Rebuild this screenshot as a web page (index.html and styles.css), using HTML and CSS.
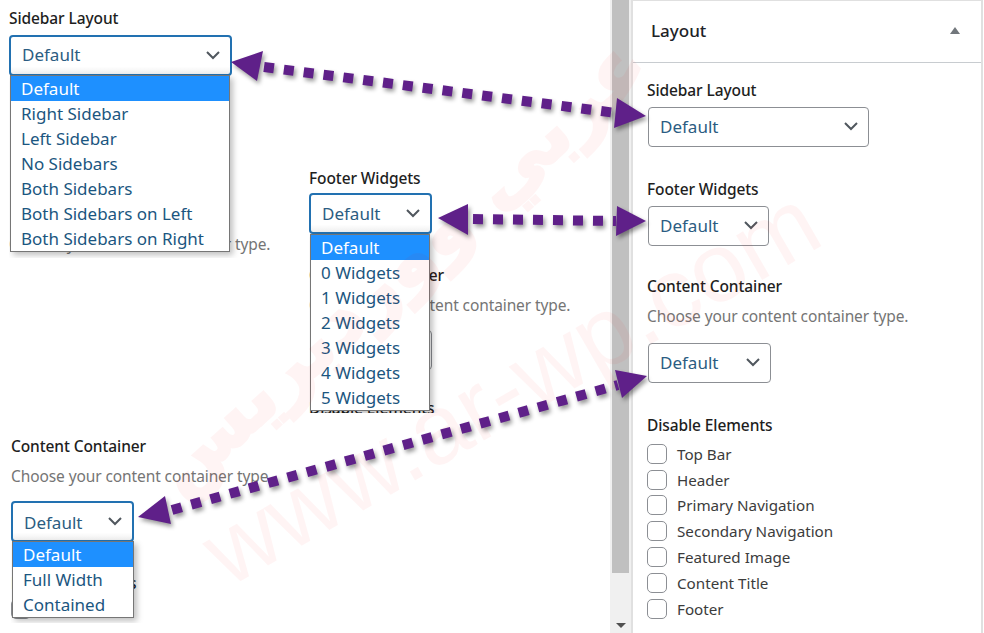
FILE: index.html
```html
<!DOCTYPE html>
<html lang="en">

<head>
    <meta http-equiv="Content-Type" content="text/html; charset=utf-8" />
    <title>Layout metabox dropdowns</title>
    <link rel="stylesheet" href="styles.css">
</head>

<body>
    <div id="main">
        <div id="shots">
            <div class="clip" id="clip-sidebar">
                <p class="label">Sidebar Layout</p>
                <div class="select open wide">Default
                    <svg class="chevron" viewBox="0 0 14 9"><path d="M1 1l6 6 6-6" /></svg>
                </div>
                <p class="help behind">Choose your content container type.</p>
                <ul class="dropdown">
                    <li class="selected">Default</li>
                    <li>Right Sidebar</li>
                    <li>Left Sidebar</li>
                    <li>No Sidebars</li>
                    <li>Both Sidebars</li>
                    <li>Both Sidebars on Left</li>
                    <li>Both Sidebars on Right</li>
                </ul>
            </div>

            <div class="clip" id="clip-footer">
                <p class="label">Footer Widgets</p>
                <div class="select open">Default
                    <svg class="chevron" viewBox="0 0 14 9"><path d="M1 1l6 6 6-6" /></svg>
                </div>
                <p class="label second">Content Container</p>
                <p class="help">Choose your content container type.</p>
                <div class="select ghost">Default</div>
                <p class="label third">Disable Elements</p>
                <ul class="dropdown">
                    <li class="selected">Default</li>
                    <li>0 Widgets</li>
                    <li>1 Widgets</li>
                    <li>2 Widgets</li>
                    <li>3 Widgets</li>
                    <li>4 Widgets</li>
                    <li>5 Widgets</li>
                </ul>
            </div>

            <div class="clip" id="clip-content">
                <p class="label">Content Container</p>
                <p class="help">Choose your content container type.</p>
                <div class="select open">Default
                    <svg class="chevron" viewBox="0 0 14 9"><path d="M1 1l6 6 6-6" /></svg>
                </div>
                <p class="label fourth">Disable Elements</p>
                <span class="check"></span>
                <ul class="dropdown">
                    <li class="selected">Default</li>
                    <li>Full Width</li>
                    <li>Contained</li>
                </ul>
            </div>
        </div>

        <div id="scrollbar">
            <div class="thumb"></div>
            <div class="arrow-down"></div>
        </div>

        <div id="panel">
            <div class="panel-head">
                <h2>Layout</h2>
                <span class="toggle"></span>
            </div>
            <div class="panel-body">
                <p class="label">Sidebar Layout</p>
                <div class="select wide">Default
                    <svg class="chevron" viewBox="0 0 14 9"><path d="M1 1l6 6 6-6" /></svg>
                </div>
                <p class="label">Footer Widgets</p>
                <div class="select">Default
                    <svg class="chevron" viewBox="0 0 14 9"><path d="M1 1l6 6 6-6" /></svg>
                </div>
                <p class="label">Content Container</p>
                <p class="help">Choose your content container type.</p>
                <div class="select">Default
                    <svg class="chevron" viewBox="0 0 14 9"><path d="M1 1l6 6 6-6" /></svg>
                </div>
                <p class="label">Disable Elements</p>
                <div class="checks">
                    <label><span class="check"></span>Top Bar</label>
                    <label><span class="check"></span>Header</label>
                    <label><span class="check"></span>Primary Navigation</label>
                    <label><span class="check"></span>Secondary Navigation</label>
                    <label><span class="check"></span>Featured Image</label>
                    <label><span class="check"></span>Content Title</label>
                    <label><span class="check"></span>Footer</label>
                </div>
            </div>
        </div>

        <!-- site watermark, sits over everything but is very faint -->
        <div class="mark mark-ar" dir="rtl" lang="ar">عربي ووردبريس</div>
        <div class="mark mark-url">www.ar-wp.com</div>

        <svg id="arrows" viewBox="0 0 984 633">
            <g class="arrow">
                <line x1="264" y1="67" x2="616" y2="113" />
                <polygon points="231,62 263,51 257,81" />
                <polygon points="646,116 617,98 614,128" />
            </g>
            <g class="arrow">
                <line x1="473" y1="219" x2="616" y2="221" />
                <polygon points="438,218 468,204 468,235" />
                <polygon points="646,221 617,206 616,236" />
            </g>
            <g class="arrow">
                <line x1="172" y1="510" x2="618" y2="385" />
                <polygon points="138,517 165,496 171,524" />
                <polygon points="647,376 615,370 622,398" />
            </g>
        </svg>
    </div>
</body>

</html>
```

FILE: styles.css
```css
html,
body {
    margin: 0;
    padding: 0;
    background: #fff;
}

#main {
    position: relative;
    display: flex;
    width: 984px;
    height: 633px;
    overflow: hidden;
    font-family: "Noto Sans", sans-serif;
    color: #2c3338;
}

#shots {
    position: relative;
    width: 610px;
}

/* cut-outs of the editor, their place on the canvas is free */
.clip {
    position: absolute;
    overflow: hidden;
    padding-top: 3px;
    padding-right: 40px;
}

#clip-sidebar {
    left: 9px;
    top: 6px;
    width: 262px;
    height: 249px;
}

#clip-footer {
    left: 309px;
    top: 166px;
    width: 262px;
    height: 244px;
}

#clip-content {
    left: 11px;
    top: 434px;
    width: 262px;
    height: 186px;
}

p {
    margin: 0;
}

.label {
    font-size: 15.5px;
    font-weight: 500;
    line-height: 19px;
    color: #1e1e1e;
    letter-spacing: -0.1px;
}

.help {
    font-size: 15.5px;
    line-height: 20px;
    color: #757575;
    letter-spacing: -0.1px;
    white-space: nowrap;
}

.select {
    position: relative;
    box-sizing: border-box;
    width: 121px;
    height: 40px;
    margin-top: 7px;
    padding-left: 11px;
    border: 1px solid #8c8f94;
    border-radius: 4px;
    font-size: 17px;
    line-height: 38px;
    color: #2b5c82;
    background: #fff;
}

.select.wide {
    width: 221px;
}

.select.open {
    width: 123px;
    height: 41px;
    border: 2px solid #2271b1;
    line-height: 36px;
    background: linear-gradient(#fff 80%, #efefef);
}

.select.open.wide {
    width: 223px;
}

.select.ghost {
    width: 122px;
    margin-top: 15px;
    margin-left: 1px;
}

.chevron {
    position: absolute;
    right: 10px;
    top: 14px;
    width: 14px;
    height: 9px;
    fill: none;
    stroke: #50575e;
    stroke-width: 2;
}

.dropdown {
    position: absolute;
    left: 1px;
    margin: 0;
    padding: 0;
    list-style: none;
    border: 1px solid #767676;
    background: #fff;
    font-size: 17px;
    color: #1b5680;
    box-shadow: 3px 3px 6px rgba(0, 0, 0, 0.25);
}

.dropdown li {
    height: 25px;
    padding-left: 10px;
    line-height: 25px;
}

.dropdown .selected {
    background: #1e90ff;
    color: #fff;
}

#clip-sidebar .dropdown {
    top: 69px;
    width: 218px;
}

#clip-sidebar .behind {
    margin-top: 158px;
}

#clip-footer .select.open {
    margin-top: 5px;
    line-height: 38px;
}

#clip-footer .dropdown {
    top: 68px;
    width: 118px;
}

#clip-footer .second {
    margin-top: 32px;
}

#clip-footer .help {
    margin-top: 10px;
}

#clip-footer .third {
    margin-top: 29px;
}

#clip-content .dropdown {
    top: 107px;
    width: 120px;
}

#clip-content .help {
    margin-top: 10px;
}

#clip-content .select {
    margin-top: 15px;
    line-height: 39px;
}

#clip-content .fourth {
    margin-top: 32px;
}

#clip-content .check {
    margin-top: 6px;
}

#scrollbar {
    position: relative;
    width: 21px;
    height: 633px;
    background: #f0f0f0;
}

.thumb {
    width: 17px;
    height: 573px;
    margin-left: 2px;
    background: #c0c0c0;
}

.arrow-down {
    position: absolute;
    left: 6px;
    top: 623px;
    border-left: 5px solid transparent;
    border-right: 5px solid transparent;
    border-top: 5px solid #505050;
}

#panel {
    box-sizing: border-box;
    width: 352px;
    height: 633px;
    border: 1px solid #e0e0e0;
    border-width: 1px 2px 0 2px;
    background: #fff;
}

.panel-head {
    display: flex;
    align-items: center;
    justify-content: space-between;
    height: 59px;
    padding: 0 21px 2px 18px;
    border-bottom: 1px solid #c8ccd0;
}

h2 {
    margin: 0;
    font-size: 17px;
    font-weight: 500;
    color: #1d2327;
}

.toggle {
    border-left: 5px solid transparent;
    border-right: 5px solid transparent;
    border-bottom: 7px solid #72777c;
}

.panel-body {
    padding: 18px 0 0 14px;
}

.panel-body .select {
    margin-left: 1px;
    margin-bottom: 33px;
}

.panel-body .select:nth-of-type(2) {
    margin-bottom: 31px;
}

.panel-body .select:nth-of-type(3) {
    width: 123px;
    margin-top: 17px;
    margin-bottom: 33px;
}

.panel-body .help {
    margin-top: 10px;
}

.checks {
    display: flex;
    flex-direction: column;
    margin-top: 6px;
}

.checks label {
    display: flex;
    align-items: center;
    height: 25.8px;
    font-size: 15.2px;
    color: #3c3c3c;
}

.check {
    display: block;
    flex: none;
    box-sizing: border-box;
    width: 20px;
    height: 20px;
    margin-right: 10px;
    border: 1px solid #8c8f94;
    border-radius: 5px;
    background: #fff;
}

.mark {
    position: absolute;
    white-space: nowrap;
    color: #ff0000;
    opacity: 0.04;
    pointer-events: none;
}

.mark-ar {
    left: 80px;
    top: 220px;
    font-family: "DejaVu Sans", sans-serif;
    font-size: 78px;
    font-weight: bold;
    -webkit-text-stroke: 3px #ff0000;
    transform: rotate(-42deg);
}

.mark-url {
    left: 165px;
    top: 330px;
    font-family: "Liberation Sans", sans-serif;
    font-size: 98px;
    transform: rotate(-30deg);
}

#arrows {
    position: absolute;
    left: 0;
    top: 0;
    width: 984px;
    height: 633px;
    filter: drop-shadow(2px 3px 2px rgba(0, 0, 0, 0.4));
}

.arrow line {
    stroke: #5f2089;
    stroke-width: 10;
    stroke-dasharray: 10 10;
}

.arrow polygon {
    fill: #5f2089;
}
```
